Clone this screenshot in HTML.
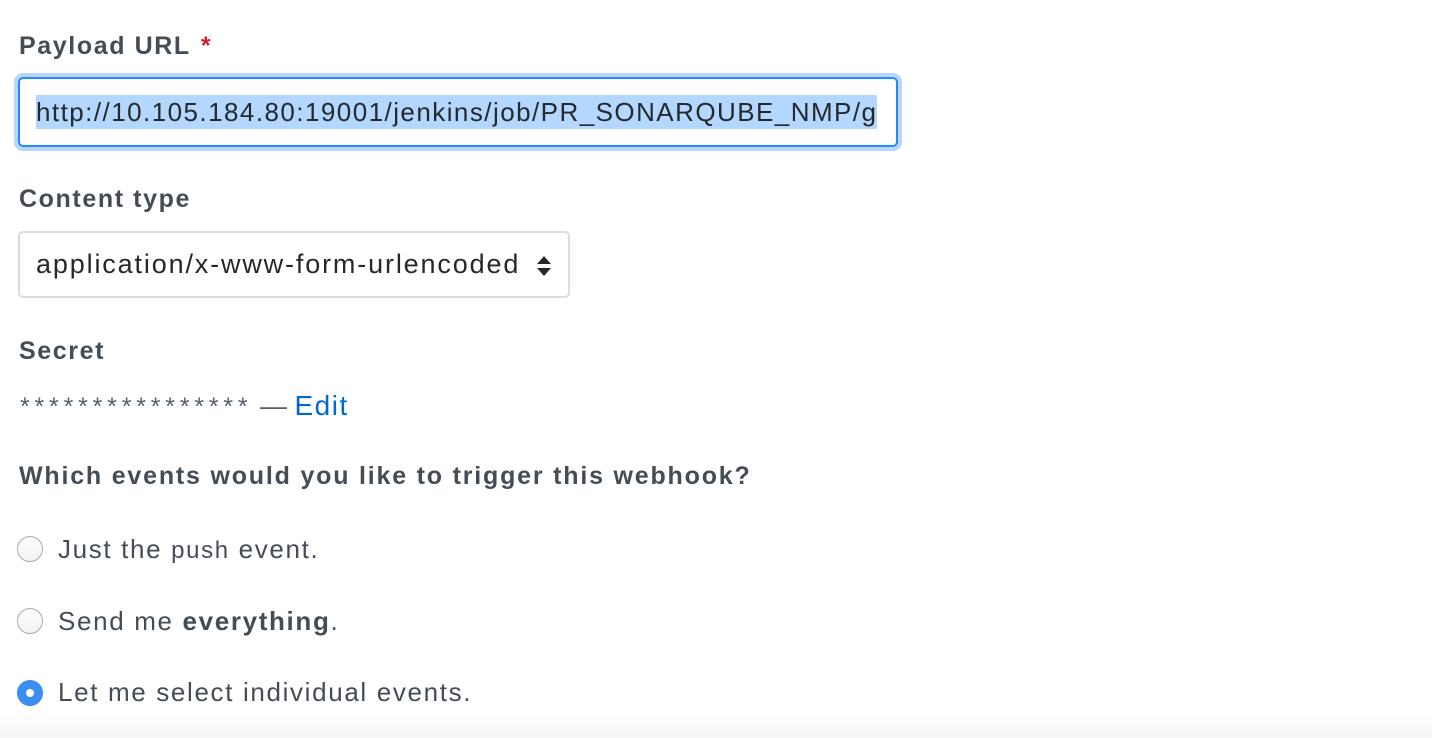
<!DOCTYPE html>
<html><head><style>
body{margin:0;width:1432px;height:738px;background:#fff;font-family:"Liberation Sans",sans-serif;color:#24292e;position:relative;overflow:hidden}
.lbl{position:absolute;left:19px;font-weight:bold;font-size:25px;color:#444d56;letter-spacing:1.6px}
.inp{position:absolute;left:18px;top:77px;width:876px;height:66px;border:2px solid #2188ff;border-radius:5px;box-shadow:0 0 0 4px #b8d6fb}
.inp span{position:absolute;left:16px;top:16px;height:34px;line-height:34px;font-size:26px;background:#b3d7ff;white-space:nowrap;color:#24292e;letter-spacing:1.45px}
.sel{position:absolute;left:18px;top:231px;width:548px;height:63px;border:2px solid #dadcde;border-radius:5px}
.sel span{position:absolute;left:16px;top:14px;font-size:27px;line-height:34px;color:#24292e;letter-spacing:1.85px}
.r{position:absolute;left:17px;width:24px;height:24px;border:1px solid #aaa;border-radius:50%;background:linear-gradient(#fff,#f2f2f2)}
.t{position:absolute;left:58px;font-size:26px;color:#444d56;line-height:34px;letter-spacing:1.65px}
</style></head><body>
<div class="lbl" style="top:32px">Payload URL <span style="color:#cb2431;margin-left:2px">*</span></div>
<div class="inp"><span>http://10.105.184.80:19001/jenkins/job/PR_SONARQUBE_NMP/g</span></div>
<div class="lbl" style="top:185px">Content type</div>
<div class="sel"><span>application/x-www-form-urlencoded</span>
<svg style="position:absolute;left:516px;top:22px" width="16" height="22" viewBox="0 0 16 22"><path d="M8 1L15 9H1Z M8 21L15 13H1Z" fill="#24292e"/></svg></div>
<div class="lbl" style="top:337px">Secret</div>
<div style="position:absolute;left:20px;top:389px;font-size:25px;color:#586069;line-height:34px;white-space:nowrap"><span style="letter-spacing:4.8px">****************</span><span style="font-size:27px"> — </span><span style="color:#0366d6;font-size:28px;letter-spacing:1.5px">Edit</span></div>
<div class="lbl" style="top:462px;letter-spacing:1.8px">Which events would you like to trigger this webhook?</div>
<div class="r" style="top:536px"></div>
<div class="t" style="top:532px">Just the <span style="font-size:24px">push</span> event.</div>
<div class="r" style="top:608px"></div>
<div class="t" style="top:604px">Send me <b>everything</b>.</div>
<div class="r" style="top:680px;background:#3b8df0;border-color:#3b8df0"><div style="position:absolute;left:8px;top:8px;width:8px;height:8px;border-radius:50%;background:#fff"></div></div>
<div class="t" style="top:675px">Let me select individual events.</div>
<div style="position:absolute;left:0;top:712px;width:1432px;height:26px;background:linear-gradient(rgba(245,245,245,0),#f6f6f6)"></div>
</body></html>
